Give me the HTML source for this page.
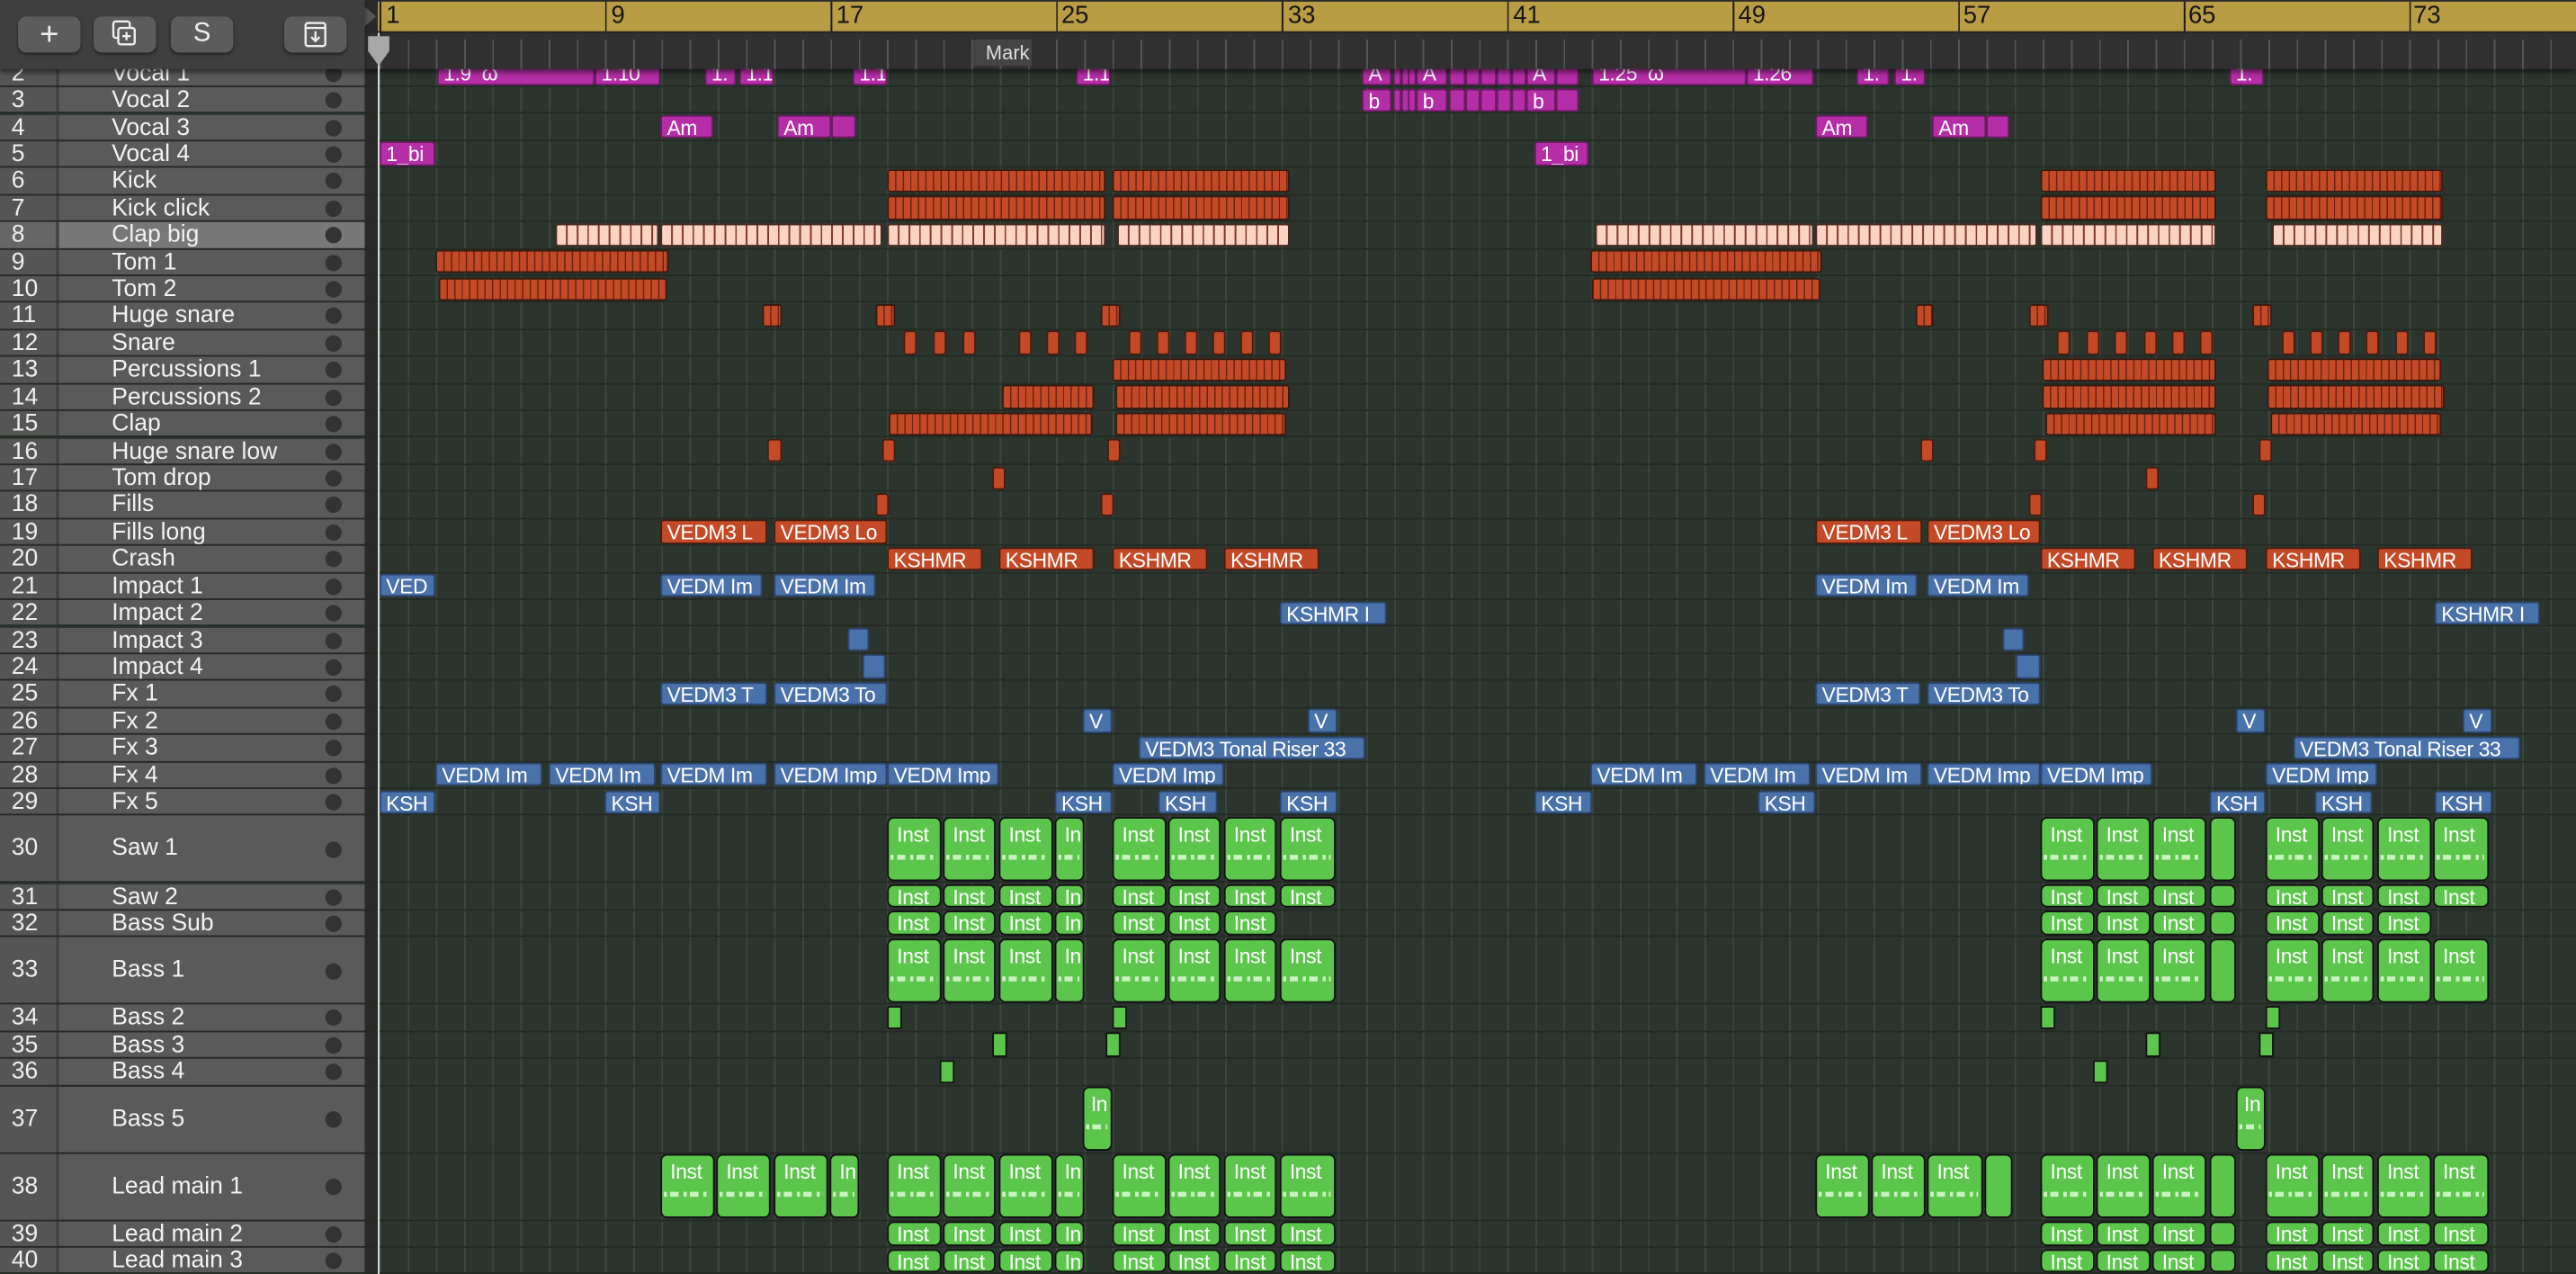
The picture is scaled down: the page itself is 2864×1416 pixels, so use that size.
<!DOCTYPE html>
<html><head><meta charset="utf-8"><style>
*{margin:0;padding:0;box-sizing:border-box}
html,body{width:2864px;height:1416px;overflow:hidden;background:#2c352d}
.s{position:absolute;left:0;top:0;width:1568px;height:775px;transform:scale(1.82653,1.8271);transform-origin:0 0;font-family:"Liberation Sans",sans-serif;overflow:hidden;background:#2c352d}
.grid{position:absolute;left:230.9px;top:0;width:1400px;height:775px;background:repeating-linear-gradient(90deg,#3c473d 0 1px,transparent 1px 17.16px)}
.ar{position:absolute;left:0;width:1568px;border-bottom:1px solid #232a24}
.ar i{position:absolute;top:0.5px;bottom:0.5px;font-style:normal;color:#fff;font-size:12.5px;line-height:15px;padding-left:3px;overflow:hidden;white-space:nowrap;border-radius:2px;letter-spacing:-0.2px}
.p i{background:#b62ea7;border:1px solid #6e1b66}
.o i{background:repeating-linear-gradient(90deg,#c44a27 0 3.8px,#6a2311 3.8px 4.6px);border:1px solid #3a1a10}
.ot i{background:#c44a27;border:1px solid #4a1d10}
.c i{background:repeating-linear-gradient(90deg,#fbd3c4 0 5.5px,#7a3a2a 5.5px 6.5px);border:1px solid #4a2a20}
.b i{background:#4a72aa;border:1px solid #2b4670}
.g i{background:#5cc64c;border:1px solid #111;border-radius:4px;padding-left:5px}
.g i u{position:absolute;left:1px;right:2px;top:60%;height:3px;background:repeating-linear-gradient(90deg,#c9f2c0 0 2px,transparent 2px 4px,#c9f2c0 4px 9px,transparent 9px 12px);text-decoration:none}
.tl{position:absolute;left:0;width:222px;background:#5a5a5a;border-bottom:1px solid #3b3b3b}
.tl b{position:absolute;left:0;top:0;bottom:0;width:36px;background:#555;border-right:2px solid #444;font-weight:normal;color:#eee;font-size:14.5px;padding-left:7px}
.tl span{position:absolute;left:68px;color:#f2f2f2;font-size:14.5px}
.tl em{position:absolute;left:198px;width:10px;height:10px;border-radius:50%;background:#333}
.btn{position:absolute;top:10px;width:38px;height:22px;background:#5c5c5c;border-radius:5px;color:#eee;text-align:center;font-size:16px;line-height:22px;box-shadow:0 1px 2px #222}
</style></head><body><div class="s">
<div class="grid"></div>

<div class="tl" style="top:36.7px;height:16.4px;line-height:16px"><b>2</b><span>Vocal 1</span><em style="top:3px"></em></div>
<div class="tl" style="top:53.1px;height:16.4px;line-height:16px"><b>3</b><span>Vocal 2</span><em style="top:3px"></em></div>
<div class="tl" style="top:69.5px;height:16.4px;line-height:16px"><b>4</b><span>Vocal 3</span><em style="top:3px"></em></div>
<div class="tl" style="top:85.9px;height:16.4px;line-height:16px"><b>5</b><span>Vocal 4</span><em style="top:3px"></em></div>
<div class="tl" style="top:102.3px;height:16.4px;line-height:16px"><b>6</b><span>Kick</span><em style="top:3px"></em></div>
<div class="tl" style="top:118.8px;height:16.4px;line-height:16px"><b>7</b><span>Kick click</span><em style="top:3px"></em></div>
<div class="tl" style="top:135.2px;height:16.4px;line-height:16px;background:#787878"><b style="background:#666">8</b><span>Clap big</span><em style="top:3px"></em></div>
<div class="tl" style="top:151.6px;height:16.4px;line-height:16px"><b>9</b><span>Tom 1</span><em style="top:3px"></em></div>
<div class="tl" style="top:168.0px;height:16.4px;line-height:16px"><b>10</b><span>Tom 2</span><em style="top:3px"></em></div>
<div class="tl" style="top:184.4px;height:16.4px;line-height:16px"><b>11</b><span>Huge snare</span><em style="top:3px"></em></div>
<div class="tl" style="top:200.9px;height:16.4px;line-height:16px"><b>12</b><span>Snare</span><em style="top:3px"></em></div>
<div class="tl" style="top:217.3px;height:16.4px;line-height:16px"><b>13</b><span>Percussions 1</span><em style="top:3px"></em></div>
<div class="tl" style="top:233.7px;height:16.4px;line-height:16px"><b>14</b><span>Percussions 2</span><em style="top:3px"></em></div>
<div class="tl" style="top:250.1px;height:16.4px;line-height:16px"><b>15</b><span>Clap</span><em style="top:3px"></em></div>
<div class="tl" style="top:266.5px;height:16.4px;line-height:16px"><b>16</b><span>Huge snare low</span><em style="top:3px"></em></div>
<div class="tl" style="top:283.0px;height:16.4px;line-height:16px"><b>17</b><span>Tom drop</span><em style="top:3px"></em></div>
<div class="tl" style="top:299.4px;height:16.4px;line-height:16px"><b>18</b><span>Fills</span><em style="top:3px"></em></div>
<div class="tl" style="top:315.8px;height:16.4px;line-height:16px"><b>19</b><span>Fills long</span><em style="top:3px"></em></div>
<div class="tl" style="top:332.2px;height:16.4px;line-height:16px"><b>20</b><span>Crash</span><em style="top:3px"></em></div>
<div class="tl" style="top:348.6px;height:16.4px;line-height:16px"><b>21</b><span>Impact 1</span><em style="top:3px"></em></div>
<div class="tl" style="top:365.1px;height:16.4px;line-height:16px"><b>22</b><span>Impact 2</span><em style="top:3px"></em></div>
<div class="tl" style="top:381.5px;height:16.4px;line-height:16px"><b>23</b><span>Impact 3</span><em style="top:3px"></em></div>
<div class="tl" style="top:397.9px;height:16.4px;line-height:16px"><b>24</b><span>Impact 4</span><em style="top:3px"></em></div>
<div class="tl" style="top:414.3px;height:16.4px;line-height:16px"><b>25</b><span>Fx 1</span><em style="top:3px"></em></div>
<div class="tl" style="top:430.8px;height:16.4px;line-height:16px"><b>26</b><span>Fx 2</span><em style="top:3px"></em></div>
<div class="tl" style="top:447.2px;height:16.4px;line-height:16px"><b>27</b><span>Fx 3</span><em style="top:3px"></em></div>
<div class="tl" style="top:463.6px;height:16.4px;line-height:16px"><b>28</b><span>Fx 4</span><em style="top:3px"></em></div>
<div class="tl" style="top:480.0px;height:16.4px;line-height:16px"><b>29</b><span>Fx 5</span><em style="top:3px"></em></div>
<div class="tl" style="top:496.4px;height:41.1px;line-height:41px"><b>30</b><span>Saw 1</span><em style="top:15.5px"></em></div>
<div class="tl" style="top:537.5px;height:16.4px;line-height:16px"><b>31</b><span>Saw 2</span><em style="top:3px"></em></div>
<div class="tl" style="top:553.9px;height:16.4px;line-height:16px"><b>32</b><span>Bass Sub</span><em style="top:3px"></em></div>
<div class="tl" style="top:570.3px;height:41.1px;line-height:41px"><b>33</b><span>Bass 1</span><em style="top:15.5px"></em></div>
<div class="tl" style="top:611.4px;height:16.4px;line-height:16px"><b>34</b><span>Bass 2</span><em style="top:3px"></em></div>
<div class="tl" style="top:627.8px;height:16.4px;line-height:16px"><b>35</b><span>Bass 3</span><em style="top:3px"></em></div>
<div class="tl" style="top:644.2px;height:16.4px;line-height:16px"><b>36</b><span>Bass 4</span><em style="top:3px"></em></div>
<div class="tl" style="top:660.6px;height:41.1px;line-height:41px"><b>37</b><span>Bass 5</span><em style="top:15.5px"></em></div>
<div class="tl" style="top:701.6px;height:41.1px;line-height:41px"><b>38</b><span>Lead main 1</span><em style="top:15.5px"></em></div>
<div class="tl" style="top:742.7px;height:16.4px;line-height:16px"><b>39</b><span>Lead main 2</span><em style="top:3px"></em></div>
<div class="tl" style="top:759.1px;height:16.4px;line-height:16px"><b>40</b><span>Lead main 3</span><em style="top:3px"></em></div>
<div style="position:absolute;left:222px;top:0;width:8px;height:775px;background:#2a2a2a"></div>

<div class="ar p" style="top:36.7px;height:16.4px"><i style="left:266px;width:96px">1.9 &nbsp;ω</i><i style="left:362px;width:40px">1.10</i><i style="left:429px;width:19px">1.</i><i style="left:450px;width:21px">1.1</i><i style="left:519px;width:21px">1.1</i><i style="left:655px;width:21px">1.1</i><i style="left:829px;width:18px">A</i><i style="left:848px;width:4px"></i><i style="left:853px;width:4px"></i><i style="left:857px;width:4px"></i><i style="left:862px;width:19px">A</i><i style="left:882px;width:10px"></i><i style="left:892px;width:9px"></i><i style="left:901px;width:10px"></i><i style="left:911px;width:9px"></i><i style="left:920px;width:9px"></i><i style="left:929px;width:18px">A</i><i style="left:947px;width:14px"></i><i style="left:969px;width:94px">1.25 &nbsp;ω</i><i style="left:1063px;width:41px">1.26</i><i style="left:1130px;width:20px">1.</i><i style="left:1153px;width:19px">1.</i><i style="left:1357px;width:21px">1.</i></div>
<div class="ar p" style="top:53.1px;height:16.4px"><i style="left:829px;width:18px">b</i><i style="left:848px;width:4px"></i><i style="left:853px;width:4px"></i><i style="left:857px;width:4px"></i><i style="left:862px;width:19px">b</i><i style="left:882px;width:10px"></i><i style="left:892px;width:9px"></i><i style="left:901px;width:10px"></i><i style="left:911px;width:9px"></i><i style="left:920px;width:9px"></i><i style="left:929px;width:18px">b</i><i style="left:947px;width:14px"></i></div>
<div class="ar p" style="top:69.5px;height:16.4px"><i style="left:402px;width:32px">Am</i><i style="left:473px;width:33px">Am</i><i style="left:506px;width:15px"></i><i style="left:1105px;width:32px">Am</i><i style="left:1176px;width:33px">Am_</i><i style="left:1209px;width:14px"></i></div>
<div class="ar p" style="top:85.9px;height:16.4px"><i style="left:231px;width:34px">1_bi</i><i style="left:934px;width:33px">1_bi</i></div>
<div class="ar o" style="top:102.3px;height:16.4px"><i style="left:540px;width:133px"></i><i style="left:677px;width:108px"></i><i style="left:1242px;width:107px"></i><i style="left:1379px;width:108px"></i></div>
<div class="ar o" style="top:118.8px;height:16.4px"><i style="left:540px;width:133px"></i><i style="left:677px;width:108px"></i><i style="left:1242px;width:107px"></i><i style="left:1379px;width:108px"></i></div>
<div class="ar c" style="top:135.2px;height:16.4px"><i style="left:338px;width:63px"></i><i style="left:402px;width:135px"></i><i style="left:540px;width:133px"></i><i style="left:680px;width:105px"></i><i style="left:971px;width:133px"></i><i style="left:1105px;width:135px"></i><i style="left:1242px;width:107px"></i><i style="left:1383px;width:104px"></i></div>
<div class="ar o" style="top:151.6px;height:16.4px"><i style="left:265px;width:142px"></i><i style="left:968px;width:141px"></i></div>
<div class="ar o" style="top:168.0px;height:16.4px"><i style="left:267px;width:139px"></i><i style="left:969px;width:139px"></i></div>
<div class="ar o" style="top:184.4px;height:16.4px"><i style="left:464px;width:12px"></i><i style="left:533px;width:12px"></i><i style="left:670px;width:12px"></i><i style="left:1166px;width:11px"></i><i style="left:1235px;width:12px"></i><i style="left:1371px;width:12px"></i></div>
<div class="ar ot" style="top:200.9px;height:16.4px"><i style="left:550px;width:8px"></i><i style="left:568px;width:8px"></i><i style="left:586px;width:8px"></i><i style="left:620px;width:8px"></i><i style="left:637px;width:8px"></i><i style="left:654px;width:8px"></i><i style="left:687px;width:8px"></i><i style="left:704px;width:8px"></i><i style="left:721px;width:8px"></i><i style="left:738px;width:8px"></i><i style="left:755px;width:8px"></i><i style="left:772px;width:8px"></i><i style="left:1252px;width:8px"></i><i style="left:1270px;width:8px"></i><i style="left:1287px;width:8px"></i><i style="left:1305px;width:8px"></i><i style="left:1322px;width:8px"></i><i style="left:1339px;width:8px"></i><i style="left:1389px;width:8px"></i><i style="left:1406px;width:8px"></i><i style="left:1423px;width:8px"></i><i style="left:1440px;width:8px"></i><i style="left:1458px;width:8px"></i><i style="left:1475px;width:8px"></i></div>
<div class="ar o" style="top:217.3px;height:16.4px"><i style="left:677px;width:106px"></i><i style="left:1243px;width:106px"></i><i style="left:1380px;width:106px"></i></div>
<div class="ar o" style="top:233.7px;height:16.4px"><i style="left:610px;width:56px"></i><i style="left:679px;width:106px"></i><i style="left:1243px;width:106px"></i><i style="left:1380px;width:108px"></i></div>
<div class="ar o" style="top:250.1px;height:16.4px"><i style="left:541px;width:124px"></i><i style="left:679px;width:104px"></i><i style="left:1245px;width:104px"></i><i style="left:1382px;width:104px"></i></div>
<div class="ar ot" style="top:266.5px;height:16.4px"><i style="left:467px;width:9px"></i><i style="left:537px;width:8px"></i><i style="left:674px;width:8px"></i><i style="left:1169px;width:8px"></i><i style="left:1238px;width:8px"></i><i style="left:1375px;width:8px"></i></div>
<div class="ar ot" style="top:283.0px;height:16.4px"><i style="left:604px;width:8px"></i><i style="left:1306px;width:8px"></i></div>
<div class="ar ot" style="top:299.4px;height:16.4px"><i style="left:533px;width:8px"></i><i style="left:670px;width:8px"></i><i style="left:1235px;width:8px"></i><i style="left:1371px;width:8px"></i></div>
<div class="ar ot" style="top:315.8px;height:16.4px"><i style="left:402px;width:65px">VEDM3 L</i><i style="left:471px;width:69px">VEDM3 Lo</i><i style="left:1105px;width:65px">VEDM3 L</i><i style="left:1173px;width:69px">VEDM3 Lo</i></div>
<div class="ar ot" style="top:332.2px;height:16.4px"><i style="left:540px;width:58px">KSHMR</i><i style="left:608px;width:58px">KSHMR</i><i style="left:677px;width:58px">KSHMR</i><i style="left:745px;width:58px">KSHMR</i><i style="left:1242px;width:58px">KSHMR</i><i style="left:1310px;width:58px">KSHMR</i><i style="left:1379px;width:58px">KSHMR</i><i style="left:1447px;width:58px">KSHMR</i></div>
<div class="ar b" style="top:348.6px;height:16.4px"><i style="left:231px;width:34px">VED</i><i style="left:402px;width:62px">VEDM Im</i><i style="left:471px;width:62px">VEDM Im</i><i style="left:1105px;width:62px">VEDM Im</i><i style="left:1173px;width:62px">VEDM Im</i></div>
<div class="ar b" style="top:365.1px;height:16.4px"><i style="left:779px;width:65px">KSHMR I</i><i style="left:1482px;width:64px">KSHMR I</i></div>
<div class="ar b" style="top:381.5px;height:16.4px"><i style="left:516px;width:13px"></i><i style="left:1219px;width:13px"></i></div>
<div class="ar b" style="top:397.9px;height:16.4px"><i style="left:525px;width:14px"></i><i style="left:1227px;width:15px"></i></div>
<div class="ar b" style="top:414.3px;height:16.4px"><i style="left:402px;width:65px">VEDM3 T</i><i style="left:471px;width:69px">VEDM3 To</i><i style="left:1105px;width:64px">VEDM3 T</i><i style="left:1173px;width:69px">VEDM3 To</i></div>
<div class="ar b" style="top:430.8px;height:16.4px"><i style="left:659px;width:18px">V</i><i style="left:796px;width:18px">V</i><i style="left:1361px;width:18px">V</i><i style="left:1499px;width:18px">V</i></div>
<div class="ar b" style="top:447.2px;height:16.4px"><i style="left:693px;width:138px">VEDM3 Tonal Riser 33</i><i style="left:1396px;width:138px">VEDM3 Tonal Riser 33</i></div>
<div class="ar b" style="top:463.6px;height:16.4px"><i style="left:265px;width:65px">VEDM Im</i><i style="left:334px;width:65px">VEDM Im</i><i style="left:402px;width:65px">VEDM Im</i><i style="left:471px;width:69px">VEDM Imp</i><i style="left:540px;width:68px">VEDM Imp</i><i style="left:677px;width:68px">VEDM Imp</i><i style="left:968px;width:65px">VEDM Im</i><i style="left:1037px;width:65px">VEDM Im</i><i style="left:1105px;width:65px">VEDM Im</i><i style="left:1173px;width:69px">VEDM Imp</i><i style="left:1242px;width:68px">VEDM Imp</i><i style="left:1379px;width:68px">VEDM Imp</i></div>
<div class="ar b" style="top:480.0px;height:16.4px"><i style="left:231px;width:34px">KSH</i><i style="left:368px;width:34px">KSH</i><i style="left:642px;width:35px">KSH</i><i style="left:705px;width:36px">KSH</i><i style="left:779px;width:35px">KSH</i><i style="left:934px;width:35px">KSH</i><i style="left:1070px;width:35px">KSH</i><i style="left:1345px;width:34px">KSH</i><i style="left:1409px;width:35px">KSH</i><i style="left:1482px;width:35px">KSH</i></div>

<div class="ar g" style="top:496.4px;height:41.1px"><i style="left:540px;width:33px;line-height:20px">Inst<u></u></i><i style="left:574px;width:32px;line-height:20px">Inst<u></u></i><i style="left:608px;width:33px;line-height:20px">Inst<u></u></i><i style="left:642px;width:18px;line-height:20px">In<u></u></i><i style="left:677px;width:33px;line-height:20px">Inst<u></u></i><i style="left:711px;width:32px;line-height:20px">Inst<u></u></i><i style="left:745px;width:32px;line-height:20px">Inst<u></u></i><i style="left:779px;width:34px;line-height:20px">Inst<u></u></i><i style="left:1242px;width:33px;line-height:20px">Inst<u></u></i><i style="left:1276px;width:33px;line-height:20px">Inst<u></u></i><i style="left:1310px;width:33px;line-height:20px">Inst<u></u></i><i style="left:1345px;width:16px"></i><i style="left:1379px;width:33px;line-height:20px">Inst<u></u></i><i style="left:1413px;width:32px;line-height:20px">Inst<u></u></i><i style="left:1447px;width:33px;line-height:20px">Inst<u></u></i><i style="left:1481px;width:34px;line-height:20px">Inst<u></u></i></div>
<div class="ar g" style="top:537.5px;height:16.4px"><i style="left:540px;width:33px">Inst</i><i style="left:574px;width:32px">Inst</i><i style="left:608px;width:33px">Inst</i><i style="left:642px;width:18px">In</i><i style="left:677px;width:33px">Inst</i><i style="left:711px;width:32px">Inst</i><i style="left:745px;width:32px">Inst</i><i style="left:779px;width:34px">Inst</i><i style="left:1242px;width:33px">Inst</i><i style="left:1276px;width:33px">Inst</i><i style="left:1310px;width:33px">Inst</i><i style="left:1345px;width:16px"></i><i style="left:1379px;width:33px">Inst</i><i style="left:1413px;width:32px">Inst</i><i style="left:1447px;width:33px">Inst</i><i style="left:1481px;width:34px">Inst</i></div>
<div class="ar g" style="top:553.9px;height:16.4px"><i style="left:540px;width:33px">Inst</i><i style="left:574px;width:32px">Inst</i><i style="left:608px;width:33px">Inst</i><i style="left:642px;width:18px">In</i><i style="left:677px;width:33px">Inst</i><i style="left:711px;width:32px">Inst</i><i style="left:745px;width:32px">Inst</i><i style="left:1242px;width:33px">Inst</i><i style="left:1276px;width:33px">Inst</i><i style="left:1310px;width:33px">Inst</i><i style="left:1345px;width:16px"></i><i style="left:1379px;width:33px">Inst</i><i style="left:1413px;width:32px">Inst</i><i style="left:1447px;width:33px">Inst</i></div>
<div class="ar g" style="top:570.3px;height:41.1px"><i style="left:540px;width:33px;line-height:20px">Inst<u></u></i><i style="left:574px;width:32px;line-height:20px">Inst<u></u></i><i style="left:608px;width:33px;line-height:20px">Inst<u></u></i><i style="left:642px;width:18px;line-height:20px">In<u></u></i><i style="left:677px;width:33px;line-height:20px">Inst<u></u></i><i style="left:711px;width:32px;line-height:20px">Inst<u></u></i><i style="left:745px;width:32px;line-height:20px">Inst<u></u></i><i style="left:779px;width:34px;line-height:20px">Inst<u></u></i><i style="left:1242px;width:33px;line-height:20px">Inst<u></u></i><i style="left:1276px;width:33px;line-height:20px">Inst<u></u></i><i style="left:1310px;width:33px;line-height:20px">Inst<u></u></i><i style="left:1345px;width:16px"></i><i style="left:1379px;width:33px;line-height:20px">Inst<u></u></i><i style="left:1413px;width:32px;line-height:20px">Inst<u></u></i><i style="left:1447px;width:33px;line-height:20px">Inst<u></u></i><i style="left:1481px;width:34px;line-height:20px">Inst<u></u></i></div>
<div class="ar g" style="top:611.4px;height:16.4px"><i style="left:540px;width:9px;border-radius:1px"></i><i style="left:677px;width:9px;border-radius:1px"></i><i style="left:1242px;width:9px;border-radius:1px"></i><i style="left:1379px;width:9px;border-radius:1px"></i></div>
<div class="ar g" style="top:627.8px;height:16.4px"><i style="left:604px;width:9px;border-radius:1px"></i><i style="left:673px;width:9px;border-radius:1px"></i><i style="left:1306px;width:9px;border-radius:1px"></i><i style="left:1375px;width:9px;border-radius:1px"></i></div>
<div class="ar g" style="top:644.2px;height:16.4px"><i style="left:572px;width:9px;border-radius:1px"></i><i style="left:1274px;width:9px;border-radius:1px"></i></div>
<div class="ar g" style="top:660.6px;height:41.1px"><i style="left:659px;width:18px;line-height:20px;padding-left:4px">In<u></u></i><i style="left:1361px;width:18px;line-height:20px;padding-left:4px">In<u></u></i></div>
<div class="ar g" style="top:701.6px;height:41.1px"><i style="left:402px;width:33px;line-height:20px">Inst<u></u></i><i style="left:436px;width:33px;line-height:20px">Inst<u></u></i><i style="left:471px;width:33px;line-height:20px">Inst<u></u></i><i style="left:505px;width:18px;line-height:20px">In<u></u></i><i style="left:540px;width:33px;line-height:20px">Inst<u></u></i><i style="left:574px;width:32px;line-height:20px">Inst<u></u></i><i style="left:608px;width:33px;line-height:20px">Inst<u></u></i><i style="left:642px;width:18px;line-height:20px">In<u></u></i><i style="left:677px;width:33px;line-height:20px">Inst<u></u></i><i style="left:711px;width:32px;line-height:20px">Inst<u></u></i><i style="left:745px;width:32px;line-height:20px">Inst<u></u></i><i style="left:779px;width:34px;line-height:20px">Inst<u></u></i><i style="left:1105px;width:33px;line-height:20px">Inst<u></u></i><i style="left:1139px;width:33px;line-height:20px">Inst<u></u></i><i style="left:1173px;width:34px;line-height:20px">Inst<u></u></i><i style="left:1208px;width:17px"></i><i style="left:1242px;width:33px;line-height:20px">Inst<u></u></i><i style="left:1276px;width:33px;line-height:20px">Inst<u></u></i><i style="left:1310px;width:33px;line-height:20px">Inst<u></u></i><i style="left:1345px;width:16px"></i><i style="left:1379px;width:33px;line-height:20px">Inst<u></u></i><i style="left:1413px;width:32px;line-height:20px">Inst<u></u></i><i style="left:1447px;width:33px;line-height:20px">Inst<u></u></i><i style="left:1481px;width:34px;line-height:20px">Inst<u></u></i></div>
<div class="ar g" style="top:742.7px;height:16.4px"><i style="left:540px;width:33px">Inst</i><i style="left:574px;width:32px">Inst</i><i style="left:608px;width:33px">Inst</i><i style="left:642px;width:18px">In</i><i style="left:677px;width:33px">Inst</i><i style="left:711px;width:32px">Inst</i><i style="left:745px;width:32px">Inst</i><i style="left:779px;width:34px">Inst</i><i style="left:1242px;width:33px">Inst</i><i style="left:1276px;width:33px">Inst</i><i style="left:1310px;width:33px">Inst</i><i style="left:1345px;width:16px"></i><i style="left:1379px;width:33px">Inst</i><i style="left:1413px;width:32px">Inst</i><i style="left:1447px;width:33px">Inst</i><i style="left:1481px;width:34px">Inst</i></div>
<div class="ar g" style="top:759.1px;height:16.4px"><i style="left:540px;width:33px">Inst</i><i style="left:574px;width:32px">Inst</i><i style="left:608px;width:33px">Inst</i><i style="left:642px;width:18px">In</i><i style="left:677px;width:33px">Inst</i><i style="left:711px;width:32px">Inst</i><i style="left:745px;width:32px">Inst</i><i style="left:779px;width:34px">Inst</i><i style="left:1242px;width:33px">Inst</i><i style="left:1276px;width:33px">Inst</i><i style="left:1310px;width:33px">Inst</i><i style="left:1345px;width:16px"></i><i style="left:1379px;width:33px">Inst</i><i style="left:1413px;width:32px">Inst</i><i style="left:1447px;width:33px">Inst</i><i style="left:1481px;width:34px">Inst</i></div>

<div style="position:absolute;left:222px;top:0;width:1346px;height:20px;background:#2a2a2a"></div>
<div style="position:absolute;left:230px;top:1px;width:1338px;height:19px;background:#b99d45 repeating-linear-gradient(90deg,#1a1a1a 0 1px,transparent 1px 137.28px) 1px 0;border-bottom:1px solid #222"></div>
<div style="position:absolute;left:222px;top:20px;width:1346px;height:21.6px;background:#303030 repeating-linear-gradient(90deg,#555 0 1px,transparent 1px 17.16px) 8.9px 4px/100% 18px no-repeat;box-shadow:0 2px 3px rgba(0,0,0,.5)"></div>
<div style="position:absolute;left:0;top:20px;width:1568px;font-size:15px;color:#151515">
<span style="position:absolute;left:235px;top:-19px">1</span><span style="position:absolute;left:372px;top:-19px">9</span><span style="position:absolute;left:509px;top:-19px">17</span><span style="position:absolute;left:646px;top:-19px">25</span><span style="position:absolute;left:784px;top:-19px">33</span><span style="position:absolute;left:921px;top:-19px">41</span><span style="position:absolute;left:1058px;top:-19px">49</span><span style="position:absolute;left:1195px;top:-19px">57</span><span style="position:absolute;left:1332px;top:-19px">65</span><span style="position:absolute;left:1469px;top:-19px">73</span></div>
<div style="position:absolute;left:222px;top:4px;width:0;height:0;border-left:7px solid #555;border-top:6px solid transparent;border-bottom:6px solid transparent"></div>
<div style="position:absolute;left:592px;top:24px;width:36px;height:16px;background:#444;color:#ddd;font-size:12px;line-height:16px;padding-left:8px;overflow:hidden;border-radius:3px 0 0 0;white-space:nowrap">Mark</div>
<div style="position:absolute;left:230px;top:20px;width:1px;height:755px;background:#e8e8e8"></div>
<svg style="position:absolute;left:223px;top:21px" width="15" height="20"><path d="M1 1 H14 V10 L7.5 19 L1 10 Z" fill="#a8a8a8"/></svg>

<div style="position:absolute;left:0;top:0;width:222px;height:41.6px;background:#3f3f3f;box-shadow:0 2px 3px rgba(0,0,0,.5)"></div>
<div class="btn" style="left:11px;font-size:20px">+</div>
<div class="btn" style="left:57px"><svg width="20" height="18" viewBox="0 0 20 18" style="margin-top:2px"><rect x="3" y="1" width="10" height="10" rx="1.5" fill="none" stroke="#eee" stroke-width="1.3"/><rect x="6" y="5" width="10" height="10" rx="1.5" fill="#5c5c5c" stroke="#eee" stroke-width="1.3"/><path d="M11 7.5v5M8.5 10h5" stroke="#eee" stroke-width="1.3"/></svg></div>
<div class="btn" style="left:104px">S</div>
<div class="btn" style="left:173px"><svg width="18" height="18" viewBox="0 0 18 18" style="margin-top:2px"><rect x="3" y="2" width="12" height="14" rx="1.5" fill="none" stroke="#eee" stroke-width="1.3"/><path d="M3 5h12M9 7v6M6.5 10.5L9 13l2.5-2.5" fill="none" stroke="#eee" stroke-width="1.3"/></svg></div>
</div></body></html>
